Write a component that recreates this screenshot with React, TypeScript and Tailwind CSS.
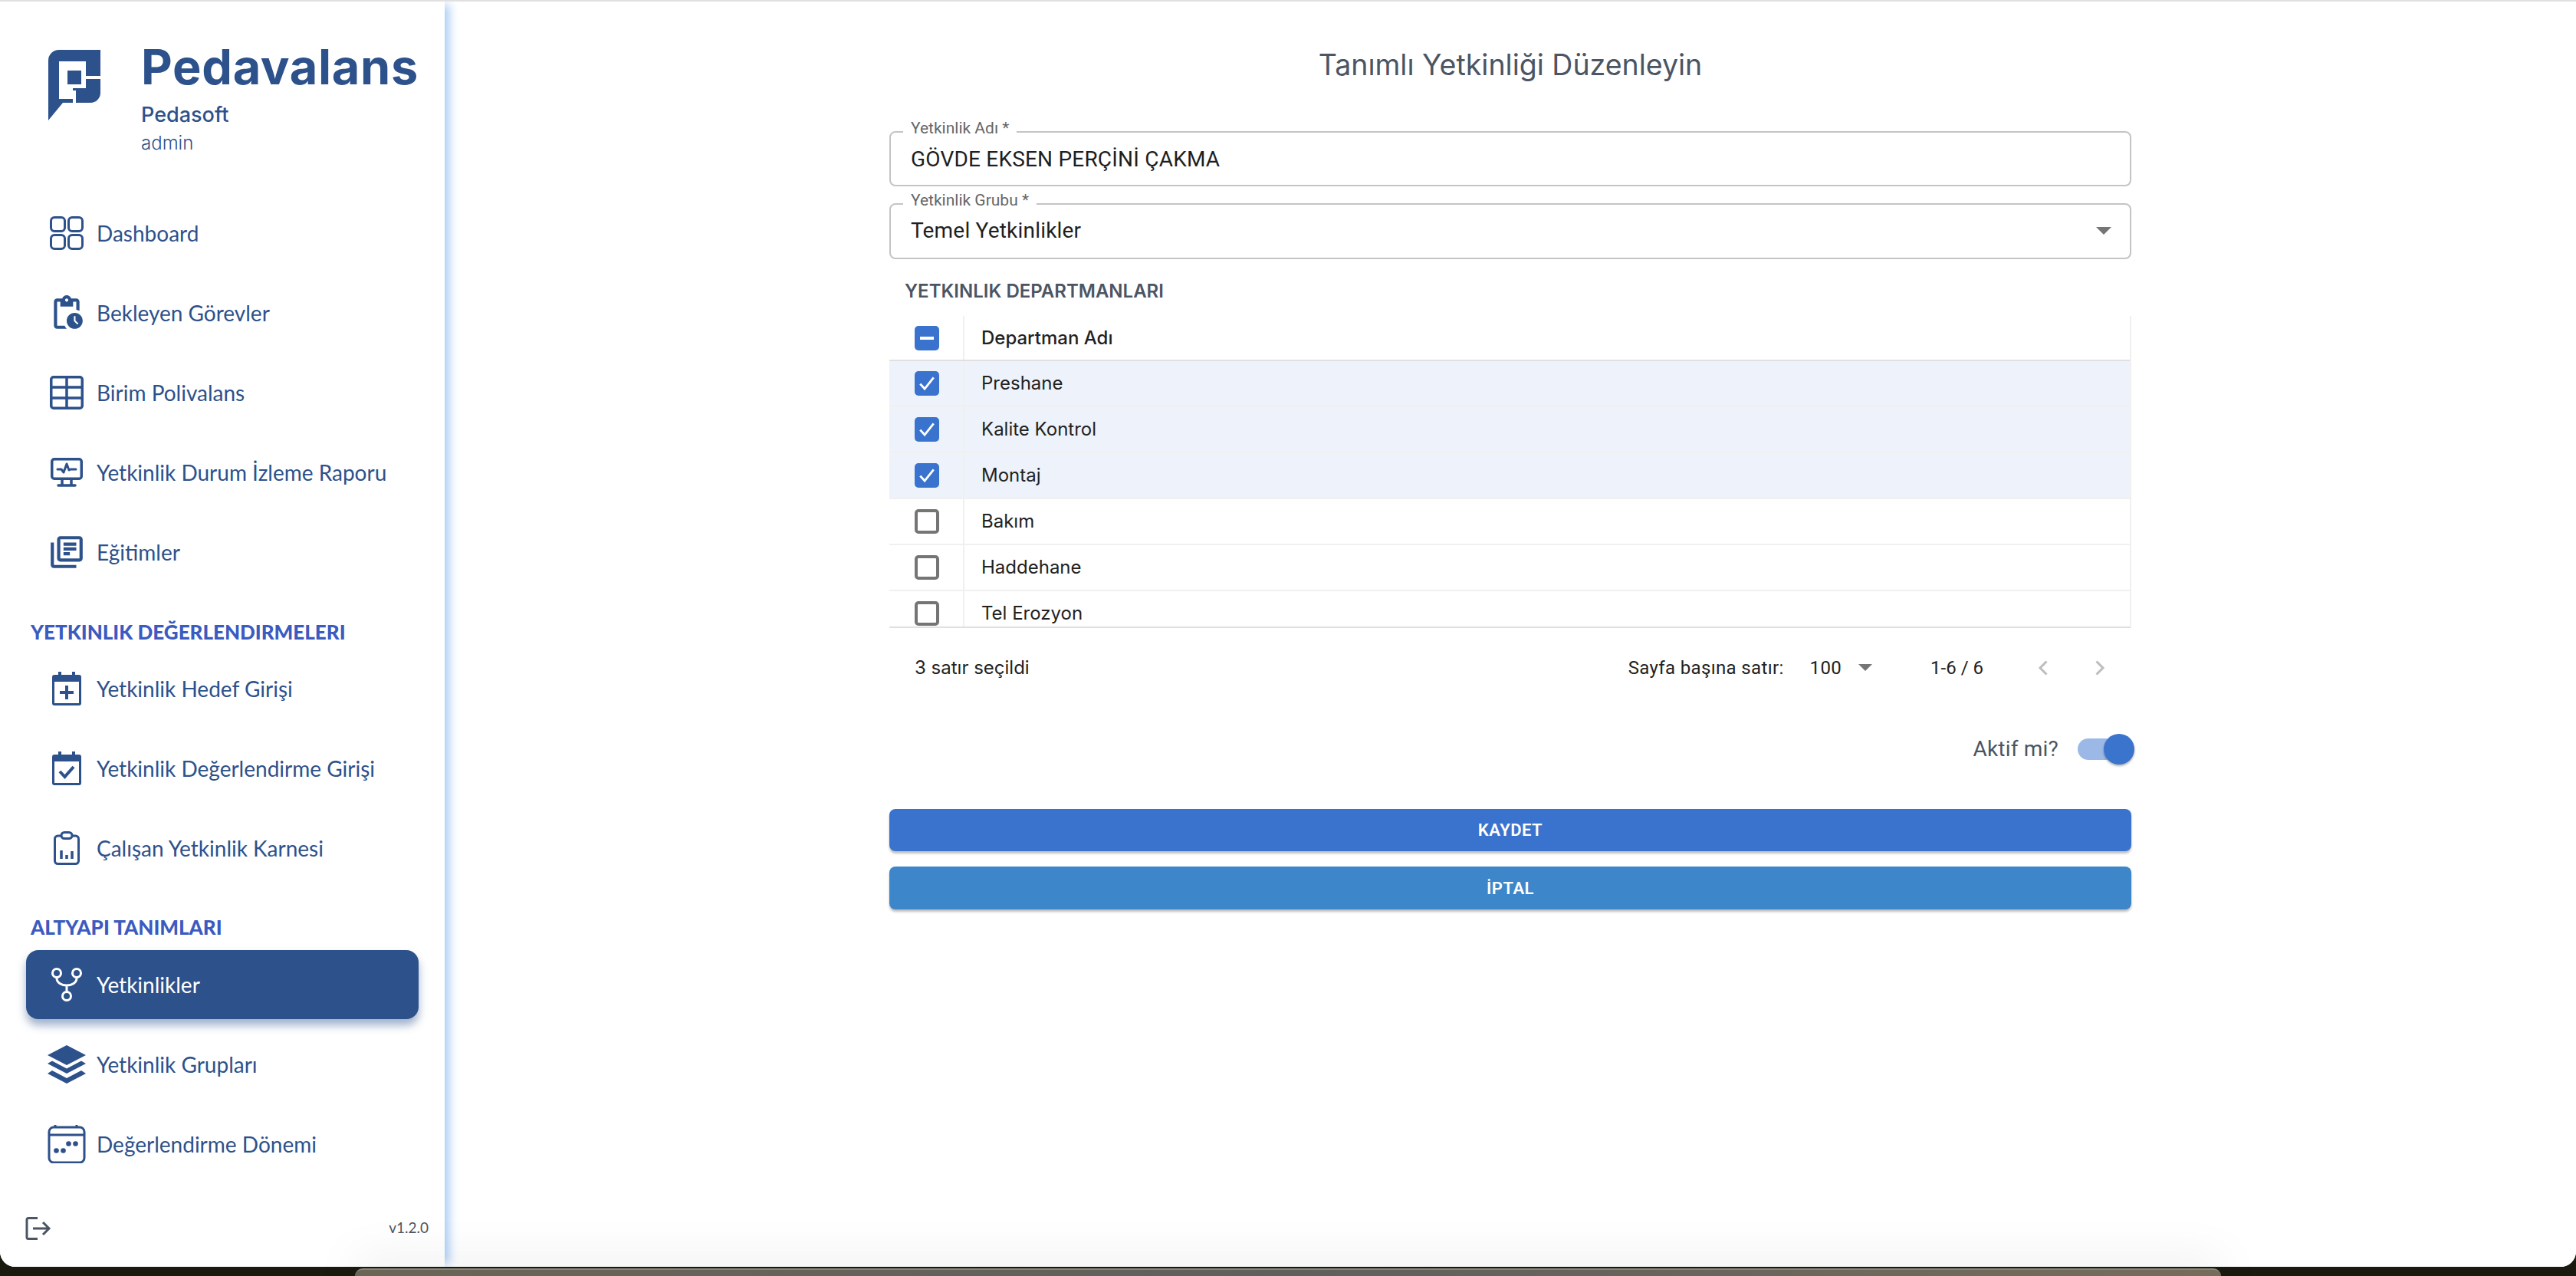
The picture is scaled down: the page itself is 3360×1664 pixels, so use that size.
import type { ReactNode } from "react";

const MuiIcon = ({ d, className = "" }: { d: string; className?: string }) => (
  <svg viewBox="0 0 24 24" className={`fill-current ${className}`}>
    <path d={d} />
  </svg>
);

const DashboardIcon = () => (
  <svg viewBox="0 0 44 44" className="w-[44px] h-[44px] fill-none stroke-current stroke-[3px]">
    <rect x="1.5" y="1.5" width="18" height="18" rx="4.5" />
    <rect x="24.5" y="1.5" width="18" height="18" rx="4.5" />
    <rect x="1.5" y="24.5" width="18" height="18" rx="4.5" />
    <rect x="24.5" y="24.5" width="18" height="18" rx="4.5" />
  </svg>
);

const TableIcon = () => (
  <svg viewBox="0 0 44 44" className="w-[44px] h-[44px] fill-none stroke-current stroke-[3.5px]">
    <rect x="1.75" y="1.75" width="40.500" height="40.500" rx="3" />
    <path d="M1.750 15h40.500M1.750 29h40.500M22 1.750v40.500" />
  </svg>
);

const MonitorIcon = () => (
  <svg viewBox="0 0 42 38" className="w-[42px] h-[38px] fill-none stroke-current stroke-[3.5px]">
    <rect x="1.750" y="1.750" width="38.500" height="25.500" rx="3" />
    <path d="M9 15h5l3 4 4-11 3 8 2-1h7" strokeWidth="3" strokeLinecap="round" strokeLinejoin="round" />
    <path d="M15 27v8M27 27v8" />
    <path d="M10 36h22" strokeLinecap="round" />
  </svg>
);

const CalendarPlusIcon = () => (
  <svg viewBox="0 0 38 44" className="w-[38px] h-[44px]">
    <path className="fill-current" d="M8 0h4v4h14V0h4v4h5a3 3 0 0 1 3 3v34a3 3 0 0 1-3 3H3a3 3 0 0 1-3-3V7a3 3 0 0 1 3-3h5zM3 13v28h32V13z" />
    <path className="fill-current" d="M17 18h4v7h7v4h-7v7h-4v-7h-7v-4h7z" />
  </svg>
);

const CalendarCheckIcon = () => (
  <svg viewBox="0 0 38 44" className="w-[38px] h-[44px]">
    <path className="fill-current" d="M8 0h4v4h14V0h4v4h5a3 3 0 0 1 3 3v34a3 3 0 0 1-3 3H3a3 3 0 0 1-3-3V7a3 3 0 0 1 3-3h5zM3 13v28h32V13z" />
    <path className="fill-none stroke-current stroke-[4px]" d="M10 26l6.500 7L28 20" />
  </svg>
);

const ClipboardChartIcon = () => (
  <svg viewBox="0 0 34 44" className="w-[34px] h-[44px] fill-none stroke-current stroke-[3px]">
    <rect x="1.500" y="6" width="31" height="36.500" rx="4" />
    <rect x="10" y="1.500" width="14" height="8" rx="4" className="fill-white" />
    <path d="M10 25v11M17 31v5M24 26v10" strokeWidth="3.500" />
  </svg>
);

const ForkIcon = () => (
  <svg viewBox="0 0 40 44" className="w-[40px] h-[44px] fill-none stroke-current stroke-[3px]">
    <circle cx="7" cy="7" r="5.500" />
    <circle cx="33" cy="7" r="5.500" />
    <circle cx="20" cy="37" r="5.500" />
    <path d="M7 12.500v1c0 6 6 9.500 13 9.500s13-3.500 13-9.500v-1M20 23v8.500" />
  </svg>
);

const LayersIcon = () => (
  <svg viewBox="0 0 50 50" className="w-[50px] h-[50px] fill-current">
    <path d="M25 0L50 13 25 26 0 13z" />
    <path d="M6 20.500l19 10 19-10 6 3.500-25 13L0 24z" />
    <path d="M6 33l19 10 19-10 6 4-25 13L0 37z" />
  </svg>
);

const PeriodIcon = () => (
  <svg viewBox="0 0 50 50" className="w-[50px] h-[50px]">
    <path className="fill-none stroke-current stroke-[3px]" d="M8 3h34a6 6 0 0 1 6 6v34a6 6 0 0 1-6 6H8a6 6 0 0 1-6-6V9a6 6 0 0 1 6-6zM2 13h46M10 0v3M38 0v3" />
    <circle cx="27.500" cy="24.500" r="3.300" className="fill-current" />
    <circle cx="36.500" cy="24.500" r="3.300" className="fill-current" />
    <circle cx="11.500" cy="33.500" r="3.300" className="fill-current" />
    <circle cx="20.500" cy="33.500" r="3.300" className="fill-current" />
  </svg>
);

const pendingPath =
  "M17 12c-2.760 0-5 2.240-5 5s2.240 5 5 5 5-2.240 5-5-2.240-5-5-5zm1.650 7.350L16.500 17.200V14h1v2.790l1.850 1.850-.7.710zM18 3h-3.180C14.400 1.840 13.300 1 12 1s-2.400.840-2.820 2H6c-1.100 0-2 .9-2 2v15c0 1.100.9 2 2 2h6.110c-.59-.57-1.070-1.250-1.420-2H6V5h2v3h8V5h2v5.080c.71.1 1.380.31 2 .6V5c0-1.100-.9-2-2-2zm-6 2c-.55 0-1-.45-1-1s.45-1 1-1 1 .45 1 1-.45 1-1 1z";
const libraryPath =
  "M20 4v12H8V4h12m0-2H8c-1.100 0-2 .9-2 2v12c0 1.100.9 2 2 2h12c1.100 0 2-.9 2-2V4c0-1.100-.9-2-2-2zM4 6H2v14c0 1.100.9 2 2 2h14v-2H4V6zM10 9h8v2h-8zm0 3h4v2h-4zm0-6h8v2h-8z";

function NavItem({ icon, label, active }: { icon: ReactNode; label: string; active?: boolean }) {
  return (
    <div
      className={`h-[90px] mx-[34px] flex items-center rounded-[16px] ${
        active ? "bg-[#2d518b] text-white shadow-[0_8px_12px_rgba(45,81,139,0.45)]" : "text-[#2d518b]"
      }`}
    >
      <div className="w-[92px] shrink-0 flex items-center justify-center pl-[13px]">{icon}</div>
      <span className="text-[28px] leading-none font-['Lato',sans-serif] whitespace-nowrap">{label}</span>
    </div>
  );
}

const SectionTitle = ({ children }: { children: ReactNode }) => (
  <div className="h-[28px] pl-[40px] flex items-center text-[26px] font-black text-[#3b5bc0] font-['Lato',sans-serif] whitespace-nowrap">
    {children}
  </div>
);

function Sidebar() {
  return (
    <aside className="relative z-10 w-[580px] shrink-0 bg-white flex flex-col shadow-[10px_0_12px_-4px_#a9cdf5]">
      <div className="flex pl-[63px] pt-[63px] h-[240px] text-[#2d518b]">
        <svg viewBox="0 0 68 92" className="w-[68px] h-[92px] shrink-0 fill-current">
          <path d="M14 0H68V34H49V15H14V64H32V50H49V38H68V56a13 13 0 0 1-13 13H36V53H32V69H19L0 92V14A14 14 0 0 1 14 0z" />
          <rect x="25" y="27" width="18" height="18" />
        </svg>
        <div className="ml-[53px] font-['Inter',sans-serif]">
          <div className="text-[63px] leading-[48px] font-bold tracking-[0.7px] -mt-[2px]">Pedavalans</div>
          <div className="text-[27px] leading-[30px] font-medium mt-[24px]">Pedasoft</div>
          <div className="text-[24px] leading-[28px] font-light mt-[8px]">admin</div>
        </div>
      </div>
      <div className="flex flex-col gap-[14px] pt-[17px]">
        <NavItem icon={<DashboardIcon />} label="Dashboard" />
        <NavItem icon={<MuiIcon d={pendingPath} className="w-[50px] h-[50px]" />} label="Bekleyen Görevler" />
        <NavItem icon={<TableIcon />} label="Birim Polivalans" />
        <NavItem icon={<MonitorIcon />} label="Yetkinlik Durum İzleme Raporu" />
        <NavItem icon={<MuiIcon d={libraryPath} className="w-[50px] h-[50px]" />} label="Eğitimler" />
      </div>
      <div className="mt-[45px] mb-[15px]">
        <SectionTitle>YETKINLIK DEĞERLENDIRMELERI</SectionTitle>
      </div>
      <div className="flex flex-col gap-[14px]">
        <NavItem icon={<CalendarPlusIcon />} label="Yetkinlik Hedef Girişi" />
        <NavItem icon={<CalendarCheckIcon />} label="Yetkinlik Değerlendirme Girişi" />
        <NavItem icon={<ClipboardChartIcon />} label="Çalışan Yetkinlik Karnesi" />
      </div>
      <div className="mt-[44px] mb-[16px]">
        <SectionTitle>ALTYAPI TANIMLARI</SectionTitle>
      </div>
      <div className="flex flex-col gap-[14px]">
        <NavItem active icon={<ForkIcon />} label="Yetkinlikler" />
        <NavItem icon={<LayersIcon />} label="Yetkinlik Grupları" />
        <NavItem icon={<PeriodIcon />} label="Değerlendirme Dönemi" />
      </div>
      <div className="mt-auto h-[66px] pl-[33px] pr-[21px] pb-[35px] flex items-center justify-between">
        <svg viewBox="0 0 34 30" className="w-[34px] h-[30px] fill-none stroke-[#4b5563] stroke-[3px]">
          <path d="M16 1.500H4a2 2 0 0 0-2 2v23a2 2 0 0 0 2 2h12M10 15h21M23 7l8 8-8 8" />
        </svg>
        <span className="text-[19px] text-[#4b5563] font-['Lato',sans-serif]">v1.2.0</span>
      </div>
    </aside>
  );
}

function OutlinedField({ label, value, select, className = "" }: { label: string; value: string; select?: boolean; className?: string }) {
  return (
    <div className={`relative border-2 border-[#c4c4c4] rounded-[8px] pl-[26px] flex items-center justify-between ${className}`}>
      <span className="absolute left-[16px] -top-[18px] h-[24px] px-[10px] bg-white text-[21px] leading-[24px] text-[#666666] font-['Roboto',sans-serif] whitespace-nowrap">
        {label}
      </span>
      <span className="text-[28px] tracking-[0.2px] text-[#1f1f1f] font-['Roboto',sans-serif] whitespace-nowrap">{value}</span>
      {select && <span className="mr-[24px] border-x-[10px] border-x-transparent border-t-[10px] border-t-[#757575]" />}
    </div>
  );
}

function RowCheck({ checked }: { checked?: boolean }) {
  if (checked) {
    return (
      <span className="w-[32px] h-[32px] rounded-[5px] bg-[#3a73cd] flex items-center justify-center">
        <svg viewBox="0 0 24 24" className="w-[28px] h-[28px] fill-none stroke-white stroke-[2.4px]">
          <path d="M4.500 12.500l5 5.500L19.500 5.500" />
        </svg>
      </span>
    );
  }
  return <span className="w-[32px] h-[32px] rounded-[5px] border-[4px] border-[#757575]" />;
}

const departments = [
  { name: "Preshane", checked: true },
  { name: "Kalite Kontrol", checked: true },
  { name: "Montaj", checked: true },
  { name: "Bakım", checked: false },
  { name: "Haddehane", checked: false },
  { name: "Tel Erozyon", checked: false },
];

function DepartmentTable() {
  return (
    <div>
      <div className="h-[407px] overflow-hidden border-b-2 border-b-[#e0e0e0] border-r-2 border-r-[#f0f0f0] font-['Inter',sans-serif] text-[24px] text-[#222222]">
        <div className="h-[59px] flex border-b-2 border-b-[#e0e0e0] bg-white">
          <div className="w-[98px] shrink-0 border-r-2 border-r-[#f0f0f0] pl-[33px] flex items-center">
            <span className="w-[32px] h-[32px] rounded-[5px] bg-[#3a73cd] flex items-center justify-center">
              <span className="w-[18px] h-[4px] bg-white" />
            </span>
          </div>
          <div className="pl-[22px] flex items-center font-medium">Departman Adı</div>
        </div>
        {departments.map((d) => (
          <div key={d.name} className={`h-[60px] flex border-b-2 border-b-[#f0f0f0] ${d.checked ? "bg-[#eef2fa]" : "bg-white"}`}>
            <div className="w-[98px] shrink-0 border-r-2 border-r-[#f0f0f0] pl-[33px] flex items-center">
              <RowCheck checked={d.checked} />
            </div>
            <div className="pl-[22px] flex items-center">{d.name}</div>
          </div>
        ))}
      </div>
      <div className="h-[103px] flex items-center pl-[33px] text-[24px] text-[#222222]">
        <span className="font-['Inter',sans-serif]">3 satır seçildi</span>
        <div className="ml-auto flex items-center font-['Roboto',sans-serif] tracking-[0.35px]">
          <span>Sayfa başına satır:</span>
          <span className="ml-[34px]">100</span>
          <span className="ml-[22px] border-x-[9px] border-x-transparent border-t-[9px] border-t-[#757575]" />
          <span className="ml-[76px] tracking-normal">1-6 / 6</span>
          <svg viewBox="0 0 13 20" className="ml-[71px] w-[13px] h-[20px] fill-none stroke-[#bdbdbd] stroke-[3px]">
            <path d="M11.500 1.500L3 10l8.500 8.500" />
          </svg>
          <svg viewBox="0 0 13 20" className="ml-[62px] mr-[34px] w-[13px] h-[20px] fill-none stroke-[#bdbdbd] stroke-[3px]">
            <path d="M1.500 1.500L10 10l-8.500 8.500" />
          </svg>
        </div>
      </div>
    </div>
  );
}

function EditForm() {
  return (
    <main className="flex-1 min-w-0 bg-white flex flex-col px-[580px] pt-[60px]">
      <h1 className="h-[46px] flex items-center justify-center text-[37.5px] text-[#4b5563] font-['Inter',sans-serif] font-normal whitespace-nowrap">
        Tanımlı Yetkinliği Düzenleyin
      </h1>
      <div className="mt-[63px] flex flex-col gap-[22px]">
        <OutlinedField className="h-[72px] pt-[2px]" label="Yetkinlik Adı *" value="GÖVDE EKSEN PERÇİNİ ÇAKMA" />
        <OutlinedField className="h-[73px] pb-[1px]" label="Yetkinlik Grubu *" value="Temel Yetkinlikler" select />
      </div>
      <div className="mt-[27px] h-[30px] pl-[20px] flex items-center text-[24px] font-semibold text-[#4b5563] font-['Inter',sans-serif] whitespace-nowrap">
        YETKINLIK DEPARTMANLARI
      </div>
      <div className="mt-[17px]">
        <DepartmentTable />
      </div>
      <div className="flex items-center justify-end h-[40px] mt-[35px] -mr-[4px]">
        <span className="text-[28px] tracking-[0.2px] text-[#4b5563] font-['Roboto',sans-serif]">Aktif mi?</span>
        <div className="relative ml-[25px] w-[74px] h-[28px]">
          <div className="w-[50px] h-[28px] rounded-full bg-[#9bb8e6]" />
          <div className="absolute right-0 -top-[6px] w-[40px] h-[40px] rounded-full bg-[#3a74cc] shadow-[0_2px_3px_rgba(0,0,0,0.3)]" />
        </div>
      </div>
      <button className="mt-[58px] h-[55px] rounded-[8px] bg-[#3a73cd] text-white text-[22px] tracking-[0.5px] font-semibold font-['Roboto',sans-serif] shadow-[0_3px_3px_rgba(0,0,0,0.25)]">
        KAYDET
      </button>
      <button className="mt-[20px] h-[56px] rounded-[8px] bg-[#3c86c9] text-white text-[22px] tracking-[0.5px] font-semibold font-['Roboto',sans-serif] shadow-[0_3px_3px_rgba(0,0,0,0.25)]">
        İPTAL
      </button>
    </main>
  );
}

export default function App() {
  return (
    <div className="w-[3360px] h-[1664px] overflow-hidden bg-[#1a1a10] flex flex-col">
      {/* app window */}
      <div className="h-[1652px] shrink-0 flex border-t-2 border-t-[#e0e0e0] rounded-b-[20px] overflow-hidden bg-white">
        <Sidebar />
        <EditForm />
      </div>
      {/* dock, its shadow falls on the window */}
      <div className="relative z-20 mx-[463px] mt-[2px] flex-1 rounded-t-[20px] border-t-2 border-t-[#8a867c] bg-gradient-to-r from-[#6b6558] via-[#5f5f5c] to-[#766c5c] shadow-[0_0_60px_rgba(0,0,0,0.26)]" />
    </div>
  );
}
